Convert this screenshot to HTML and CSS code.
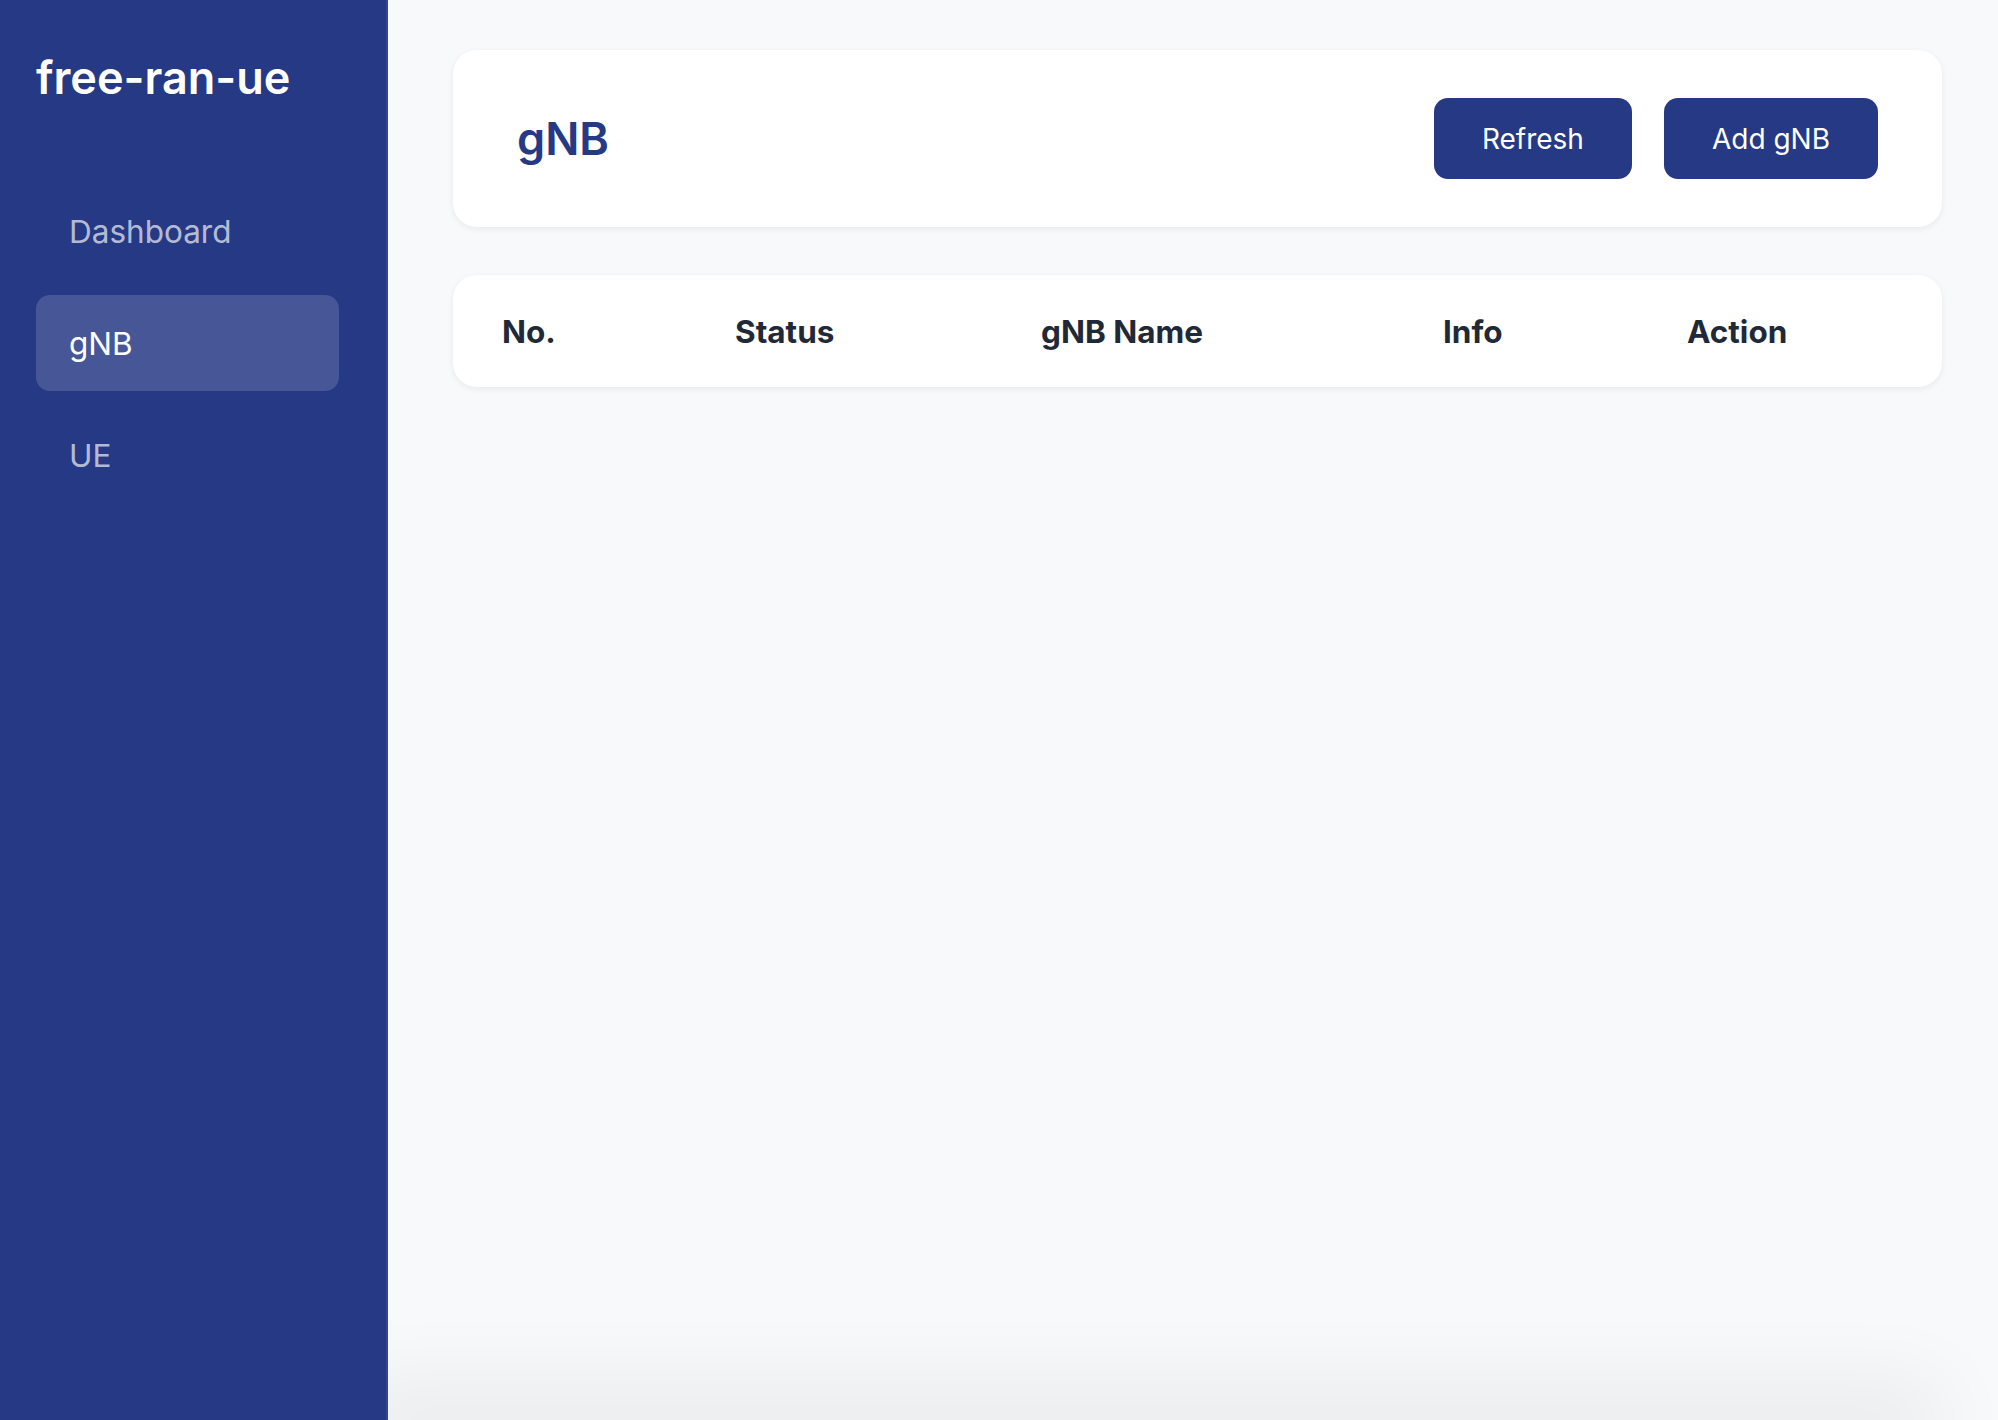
FILE: index.html
```html
<!DOCTYPE html>
<html lang="en">
<head>
<meta charset="utf-8">
<title>free-ran-ue · gNB</title>
<link rel="stylesheet" href="styles.css">
</head>
<body>
<div class="app">
  <aside class="sidebar">
    <div class="brand">free-ran-ue</div>
    <nav class="nav">
      <a class="nav-item">Dashboard</a>
      <a class="nav-item active">gNB</a>
      <a class="nav-item">UE</a>
    </nav>
  </aside>
  <main class="main">
    <section class="card header-card">
      <h1 class="page-title">gNB</h1>
      <div class="actions">
        <button class="btn">Refresh</button>
        <button class="btn">Add gNB</button>
      </div>
    </section>
    <section class="card table-card">
      <table class="table">
        <thead>
          <tr>
            <th class="col-no">No.</th>
            <th class="col-status">Status</th>
            <th class="col-name">gNB Name</th>
            <th class="col-info">Info</th>
            <th class="col-action">Action</th>
          </tr>
        </thead>
        <tbody></tbody>
      </table>
    </section>
    <div class="fold-shadow"></div>
  </main>
</div>
</body>
</html>
```
FILE: styles.css
```css
* { box-sizing: border-box; }
html, body { margin: 0; padding: 0; }
body {
  font-family: Inter, "Noto Sans", "Liberation Sans", sans-serif;
  background: #f8f9fb;
  color: #1f2937;
}
.app {
  display: flex;
  height: 100vh;
  overflow: hidden;
}
.sidebar {
  width: 388px;
  flex: 0 0 388px;
  background: #263984;
  border-right: 2px solid #34468e;
  padding: 48px 47px 36px 36px;
  display: flex;
  flex-direction: column;
}
.brand {
  color: #ffffff;
  font-size: 45px;
  font-weight: 600;
  line-height: 60px;
  letter-spacing: 0;
}
.nav {
  display: flex;
  flex-direction: column;
  gap: 16px;
  margin-top: 75px;
}
.nav-item {
  display: flex;
  align-items: center;
  height: 96px;
  padding: 0 33px;
  border-radius: 14px;
  font-size: 31.5px;
  color: rgba(255, 255, 255, 0.68);
  cursor: pointer;
}
.nav-item.active {
  background: rgba(255, 255, 255, 0.15);
  color: #ffffff;
}
.main {
  flex: 1;
  display: flex;
  flex-direction: column;
  gap: 48px;
  padding: 50px 56px 0 65px;
  overflow: hidden;
}
.card {
  background: #ffffff;
  border-radius: 24px;
  box-shadow: 0 2px 6px rgba(15, 23, 42, 0.07);
}
.header-card {
  display: flex;
  align-items: center;
  justify-content: space-between;
  padding: 48px 64px;
}
.page-title {
  margin: 0;
  font-size: 45px;
  font-weight: 600;
  color: #263984;
  line-height: 1;
}
.actions {
  display: flex;
  gap: 32px;
}
.btn {
  font-family: inherit;
  font-size: 28px;
  font-weight: 400;
  color: #ffffff;
  background: #263984;
  border: none;
  border-radius: 14px;
  height: 81px;
  padding: 0 48px;
  cursor: pointer;
}
.table-card {
  padding: 0;
}
.table {
  width: 100%;
  border-collapse: collapse;
  table-layout: fixed;
}
.table th {
  text-align: left;
  font-size: 31.5px;
  font-weight: 700;
  color: #1f2937;
  padding: 0 0 0 49px;
  height: 112px;
}
.col-no { width: 233px; }
.col-status { width: 306px; }
.col-name { width: 402px; }
.col-info { width: 244px; }
.col-action { width: auto; }
.fold-shadow {
  margin-top: auto;
  margin-left: -65px;
  margin-right: 40px;
  height: 0;
  flex: 0 0 0;
  box-shadow: 0 0 80px 40px rgba(0, 0, 0, 0.06);
}
```
